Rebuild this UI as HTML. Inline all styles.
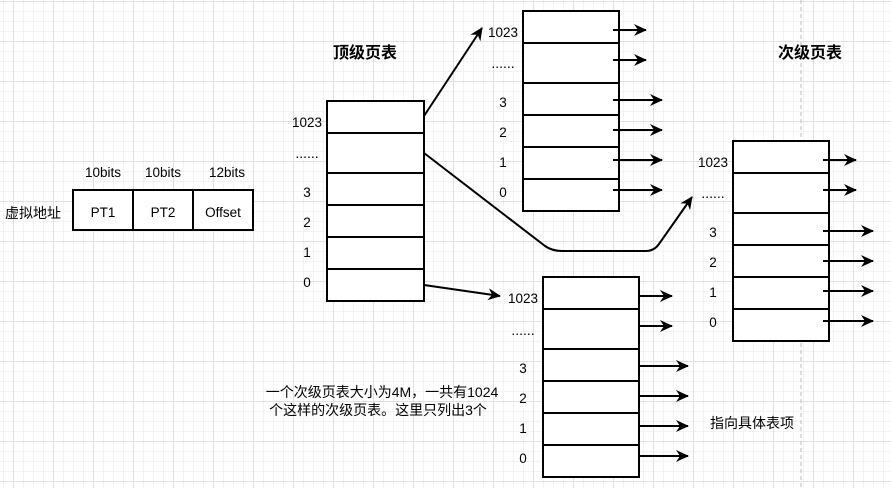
<!DOCTYPE html>
<html><head><meta charset="utf-8"><style>
html,body{margin:0;padding:0;}
body{width:891px;height:488px;overflow:hidden;background:#fff;
background-image:
linear-gradient(to right,#e0e0e0 1px,transparent 1px),
linear-gradient(to bottom,#e0e0e0 1px,transparent 1px),
linear-gradient(to right,#f3f3f3 1px,transparent 1px),
linear-gradient(to bottom,#f3f3f3 1px,transparent 1px);
background-size:40px 40px,40px 40px,10px 10px,10px 10px;
background-position:13px 1px,13px 1px,3px 1px,3px 1px;}
svg{position:absolute;left:0;top:0;}
text{font-family:"Liberation Sans","Noto Sans CJK SC",sans-serif;font-size:13.5px;fill:#000;}
.c{font-size:14px;}
.d{font-size:14px;}
.t{font-size:16px;font-weight:bold;}
</style></head><body>
<svg width="891" height="488" viewBox="0 0 891 488">
<defs>
<marker id="a" markerWidth="14" markerHeight="12" refX="12" refY="6" orient="auto" markerUnits="userSpaceOnUse">
<path d="M0,0 L13,6 L0,12 L4,6 Z" fill="#000"/></marker>
</defs>
<line x1="801" y1="0" x2="801" y2="488" stroke="#bbb" stroke-dasharray="4 3"/>
<g fill="#fff" stroke="#000" stroke-width="2">
<rect x="73" y="190" width="180" height="40"/>
<line x1="133" y1="190" x2="133" y2="230"/><line x1="193" y1="190" x2="193" y2="230"/>
<rect x="327" y="101" width="97" height="200"/>
<path d="M327 133H424M327 173H424M327 205H424M327 237H424M327 269H424"/>
<rect x="523" y="11" width="96" height="200"/>
<path d="M523 43H619M523 83H619M523 115H619M523 147H619M523 179H619"/>
<rect x="733" y="141" width="96" height="200"/>
<path d="M733 173H829M733 213H829M733 245H829M733 277H829M733 309H829"/>
<rect x="543" y="277" width="96" height="200"/>
<path d="M543 309H639M543 349H639M543 381H639M543 413H639M543 445H639"/>
</g>
<g stroke="#000" stroke-width="2" fill="none" marker-end="url(#a)">
<line x1="613" y1="30" x2="646" y2="30"/><line x1="613" y1="60" x2="646" y2="60"/>
<line x1="613" y1="100" x2="662" y2="100"/><line x1="613" y1="130" x2="662" y2="130"/>
<line x1="613" y1="160" x2="662" y2="160"/><line x1="613" y1="190" x2="662" y2="190"/>
<line x1="823" y1="160" x2="856" y2="160"/><line x1="823" y1="190" x2="856" y2="190"/>
<line x1="823" y1="231" x2="873" y2="231"/><line x1="823" y1="261" x2="873" y2="261"/>
<line x1="823" y1="291" x2="873" y2="291"/><line x1="823" y1="321" x2="873" y2="321"/>
<line x1="639" y1="296" x2="672" y2="296"/><line x1="639" y1="326" x2="672" y2="326"/>
<line x1="639" y1="366" x2="688" y2="366"/><line x1="639" y1="396" x2="688" y2="396"/>
<line x1="639" y1="426" x2="688" y2="426"/><line x1="639" y1="456" x2="688" y2="456"/>
<line x1="424" y1="116" x2="482" y2="28"/>
<path d="M424 153L545 246Q552 251 562 251L646 251Q654 251 659 244L692 197"/>
<line x1="424" y1="285" x2="500" y2="296"/>
</g>
<text class="t" x="333" y="58">顶级页表</text>
<text class="t" x="778" y="58">次级页表</text>
<text class="c" x="5" y="218">虚拟地址</text>
<text x="103" y="177" text-anchor="middle">10bits</text>
<text x="163" y="177" text-anchor="middle">10bits</text>
<text x="227" y="177" text-anchor="middle">12bits</text>
<text x="103" y="217" text-anchor="middle">PT1</text>
<text x="163" y="217" text-anchor="middle">PT2</text>
<text x="223" y="217" text-anchor="middle">Offset</text>
<g text-anchor="middle">
<text x="307" y="127">1023</text><text class="d" x="307" y="158">......</text><text x="307" y="197">3</text><text x="307" y="227">2</text><text x="307" y="257">1</text><text x="307" y="287">0</text>
<text x="503" y="37">1023</text><text class="d" x="503" y="68">......</text><text x="503" y="107">3</text><text x="503" y="137">2</text><text x="503" y="167">1</text><text x="503" y="197">0</text>
<text x="713" y="167">1023</text><text class="d" x="713" y="198">......</text><text x="713" y="237">3</text><text x="713" y="267">2</text><text x="713" y="297">1</text><text x="713" y="327">0</text>
<text x="523" y="303">1023</text><text class="d" x="523" y="335">......</text><text x="523" y="373">3</text><text x="523" y="403">2</text><text x="523" y="433">1</text><text x="523" y="463">0</text>
<text class="c" x="382" y="397">一个次级页表大小为4M，一共有1024</text>
<text class="c" x="378" y="415">个这样的次级页表。这里只列出3个</text>
</g>
<text class="c" x="710" y="428">指向具体表项</text>
</svg>
</body></html>
